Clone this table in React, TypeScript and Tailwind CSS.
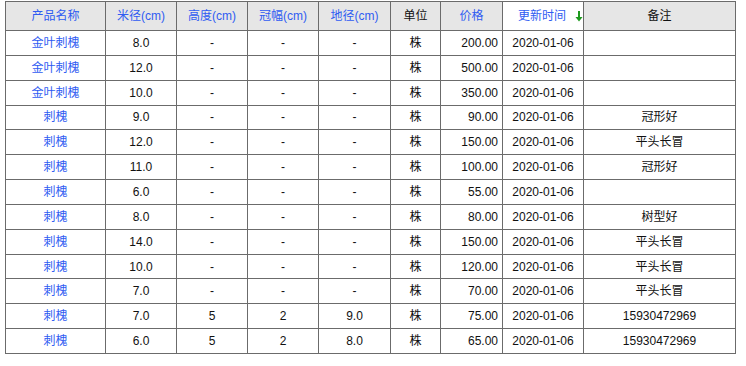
import React from 'react';

type Row = {
  name: string;
  dia: string;
  height: string;
  crown: string;
  ground: string;
  price: string;
  note: string;
};

const rows: Row[] = [
  { name: '金叶刺槐', dia: '8.0', height: '-', crown: '-', ground: '-', price: '200.00', note: '' },
  { name: '金叶刺槐', dia: '12.0', height: '-', crown: '-', ground: '-', price: '500.00', note: '' },
  { name: '金叶刺槐', dia: '10.0', height: '-', crown: '-', ground: '-', price: '350.00', note: '' },
  { name: '刺槐', dia: '9.0', height: '-', crown: '-', ground: '-', price: '90.00', note: '冠形好' },
  { name: '刺槐', dia: '12.0', height: '-', crown: '-', ground: '-', price: '150.00', note: '平头长冒' },
  { name: '刺槐', dia: '11.0', height: '-', crown: '-', ground: '-', price: '100.00', note: '冠形好' },
  { name: '刺槐', dia: '6.0', height: '-', crown: '-', ground: '-', price: '55.00', note: '' },
  { name: '刺槐', dia: '8.0', height: '-', crown: '-', ground: '-', price: '80.00', note: '树型好' },
  { name: '刺槐', dia: '14.0', height: '-', crown: '-', ground: '-', price: '150.00', note: '平头长冒' },
  { name: '刺槐', dia: '10.0', height: '-', crown: '-', ground: '-', price: '120.00', note: '平头长冒' },
  { name: '刺槐', dia: '7.0', height: '-', crown: '-', ground: '-', price: '70.00', note: '平头长冒' },
  { name: '刺槐', dia: '7.0', height: '5', crown: '2', ground: '9.0', price: '75.00', note: '15930472969' },
  { name: '刺槐', dia: '6.0', height: '5', crown: '2', ground: '8.0', price: '65.00', note: '15930472969' },
];

const th = 'border border-[#6b6b6b] font-normal text-center h-[29px] p-0';
const td = 'border border-[#6b6b6b] text-center h-[24.85px] p-0';

export default function App() {
  return (
    <div className="bg-white w-[746px] h-[366px] pt-[1px] pl-[5px] text-[12px] text-[#111] font-['Liberation_Sans','Noto_Sans_CJK_SC',sans-serif]">
      <table className="table-fixed border-collapse w-[730px]">
        <colgroup>
          <col className="w-[100px]" />
          <col className="w-[71px]" />
          <col className="w-[71px]" />
          <col className="w-[71px]" />
          <col className="w-[72px]" />
          <col className="w-[50px]" />
          <col className="w-[62px]" />
          <col className="w-[81px]" />
          <col className="w-[152px]" />
        </colgroup>
        <thead>
          <tr className="bg-[#e6e6e6]">
            <th className={`${th} text-[#2f5cf2]`}>产品名称</th>
            <th className={`${th} text-[#2f5cf2]`}>米径(cm)</th>
            <th className={`${th} text-[#2f5cf2]`}>高度(cm)</th>
            <th className={`${th} text-[#2f5cf2]`}>冠幅(cm)</th>
            <th className={`${th} text-[#2f5cf2]`}>地径(cm)</th>
            <th className={th}>单位</th>
            <th className={`${th} text-[#2f5cf2]`}>价格</th>
            <th className="border border-[#6b6b6b] font-normal h-[29px] p-0 text-left pl-[15px] whitespace-nowrap text-[#2f5cf2] bg-white">
              <span className="inline-flex items-center gap-[9px] whitespace-nowrap">
                更新时间
                <svg width="8" height="11" viewBox="0 0 8 11" className="mt-[1px] shrink-0">
                  <path d="M4 0v8" stroke="#1d9a1d" strokeWidth="2" />
                  <path d="M0.5 6L4 10.5L7.5 6z" fill="#1d9a1d" />
                </svg>
              </span>
            </th>
            <th className={th}>备注</th>
          </tr>
        </thead>
        <tbody>
          {rows.map((r, i) => (
            <tr key={i}>
              <td className={`${td} text-[#2f5cf2]`}>{r.name}</td>
              <td className={td}>{r.dia}</td>
              <td className={td}>{r.height}</td>
              <td className={td}>{r.crown}</td>
              <td className={td}>{r.ground}</td>
              <td className={td}>株</td>
              <td className={`${td} text-right pr-[4px]`}>{r.price}</td>
              <td className={td}>2020-01-06</td>
              <td className={td}>{r.note}</td>
            </tr>
          ))}
        </tbody>
      </table>
    </div>
  );
}
